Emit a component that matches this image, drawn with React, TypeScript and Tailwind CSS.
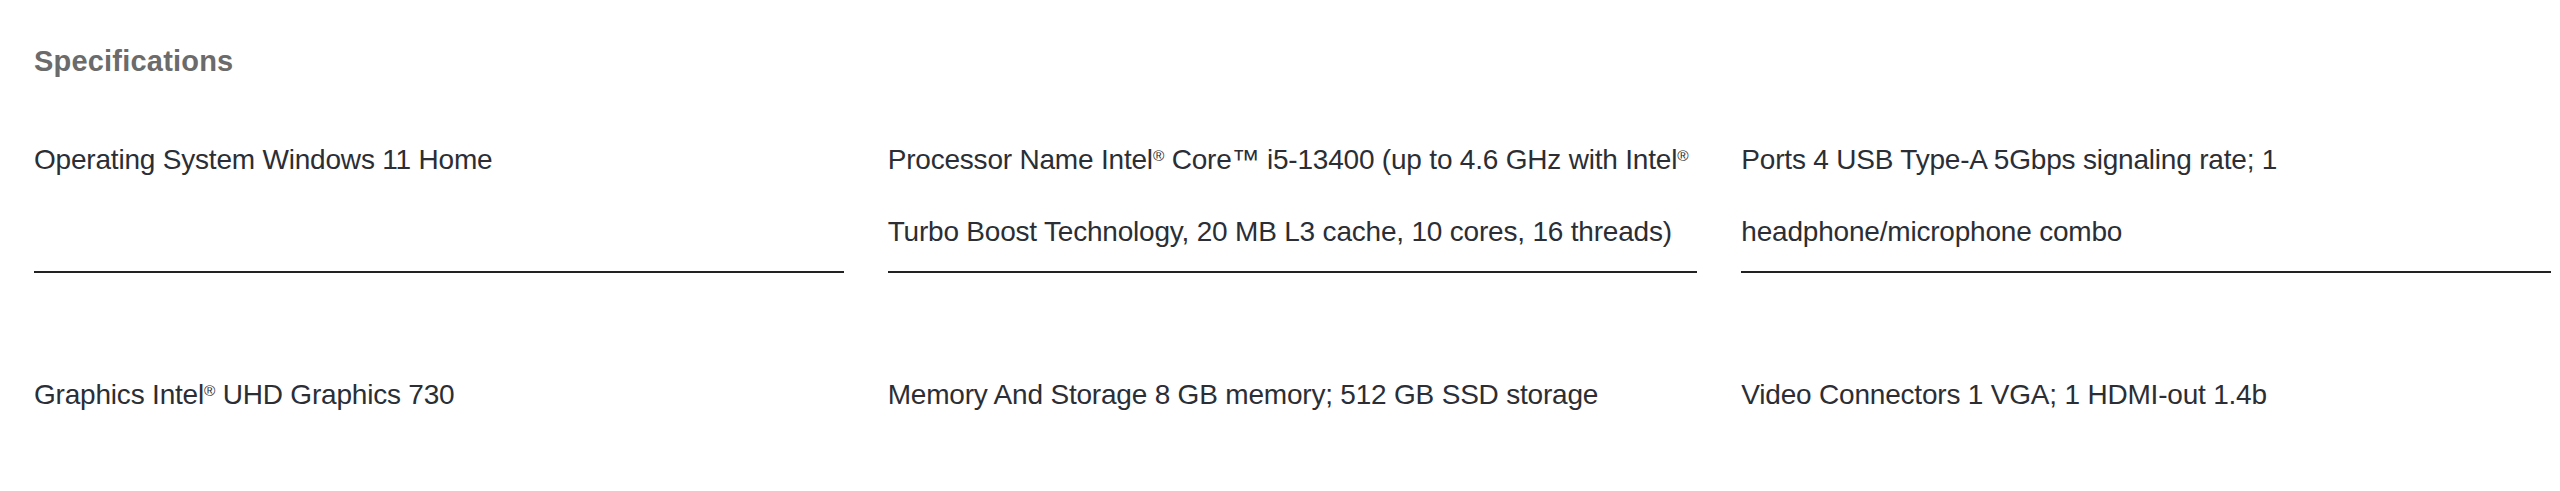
import React from "react";

type Spec = { label: string; value: React.ReactNode };

const Reg = () => (
  <sup className="text-[0.55em] leading-none top-0 align-[0.55em]">®</sup>
);

const specs: Spec[] = [
  { label: "Operating System", value: "Windows 11 Home" },
  {
    label: "Processor Name",
    value: (
      <>
        Intel<Reg /> Core™ i5-13400 (up to 4.6 GHz with Intel<Reg /> Turbo
        Boost Technology, 20 MB L3 cache, 10 cores, 16 threads)
      </>
    ),
  },
  {
    label: "Ports",
    value: "4 USB Type-A 5Gbps signaling rate; 1 headphone/microphone combo",
  },
  {
    label: "Graphics",
    value: (
      <>
        Intel<Reg /> UHD Graphics 730
      </>
    ),
  },
  { label: "Memory And Storage", value: "8 GB memory; 512 GB SSD storage" },
  { label: "Video Connectors", value: "1 VGA; 1 HDMI-out 1.4b" },
];

export default function App() {
  return (
    <div className="min-h-screen bg-white pl-[34px] pr-[9px] pt-[43px] font-['Liberation_Sans',Arial,sans-serif]">
      {/* Heading */}
      <h2 className="text-[29px] leading-[36px] font-bold text-[#6b6b6b] tracking-[0.2px]">
        Specifications
      </h2>

      {/* Spec grid */}
      <div className="mt-[45px] grid grid-cols-3 gap-x-[44px] gap-y-[86px]">
        {specs.map((s) => (
          <div
            key={s.label}
            className="border-b-2 border-[#222222] pb-[3px] min-h-[149px]"
          >
            <p className="text-[28px] leading-[72px] text-[#2b2e35] tracking-[-0.2px]">
              {s.label} {s.value}
            </p>
          </div>
        ))}
      </div>
    </div>
  );
}
